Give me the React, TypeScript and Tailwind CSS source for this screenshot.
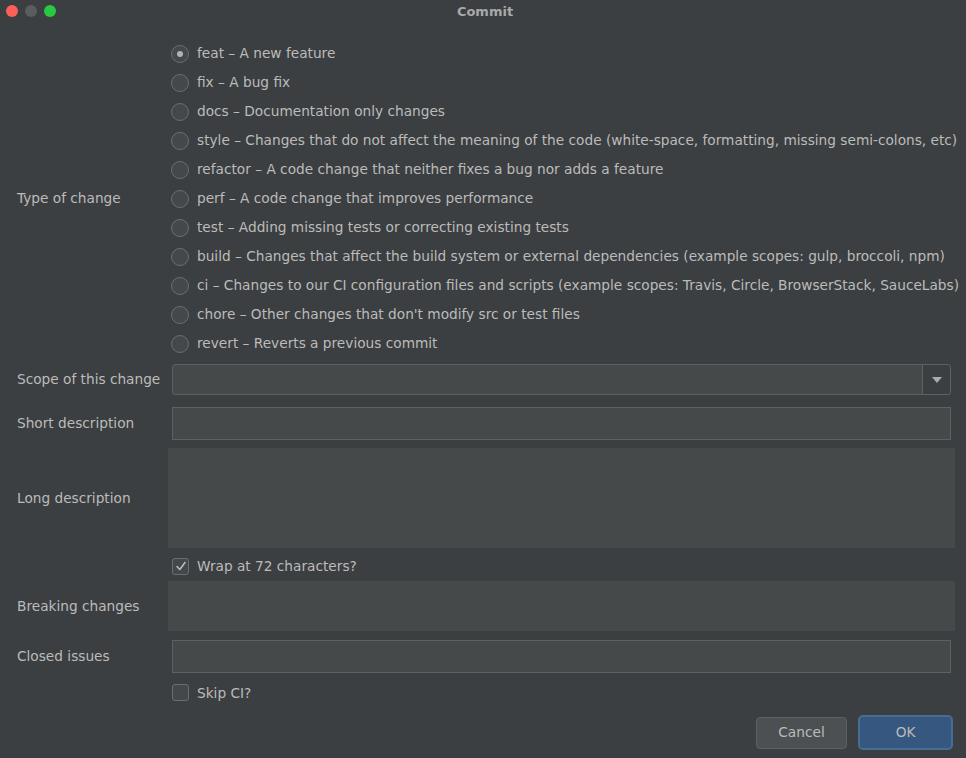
import React from "react";

const options = [
  "feat – A new feature",
  "fix – A bug fix",
  "docs – Documentation only changes",
  "style – Changes that do not affect the meaning of the code (white-space, formatting, missing semi-colons, etc)",
  "refactor – A code change that neither fixes a bug nor adds a feature",
  "perf – A code change that improves performance",
  "test – Adding missing tests or correcting existing tests",
  "build – Changes that affect the build system or external dependencies (example scopes: gulp, broccoli, npm)",
  "ci – Changes to our CI configuration files and scripts (example scopes: Travis, Circle, BrowserStack, SauceLabs)",
  "chore – Other changes that don't modify src or test files",
  "revert – Reverts a previous commit",
];

function Radio({ checked }: { checked?: boolean }) {
  return (
    <span className="w-[18px] h-[18px] rounded-full border border-[#6b6e70] bg-[#43494a] flex items-center justify-center shrink-0">
      {checked && <span className="w-[6px] h-[6px] rounded-full bg-[#b0b3b5]" />}
    </span>
  );
}

function Checkbox({ checked }: { checked?: boolean }) {
  return (
    <span className="w-[17px] h-[17px] rounded-[3px] border border-[#6b6e70] bg-[#43494a] flex items-center justify-center shrink-0">
      {checked && (
        <svg width="12" height="12" viewBox="0 0 12 12">
          <path d="M2 6.5 L4.8 9.5 L10 2.5" fill="none" stroke="#bbbbbb" strokeWidth="1.6" strokeLinecap="round" strokeLinejoin="round" />
        </svg>
      )}
    </span>
  );
}

export default function App() {
  return (
    <div
      className="w-[966px] h-[758px] bg-[#3c3f41] text-[#bbbbbb] text-[13.7px] flex flex-col overflow-hidden"
      style={{ fontFamily: '"DejaVu Sans", sans-serif' }}
    >
      {/* title bar */}
      <div className="h-[22px] flex items-center relative shrink-0">
        <div className="flex items-center gap-[7px] pl-[6px]">
          <span className="w-[12px] h-[12px] rounded-full bg-[#fe5f57]" />
          <span className="w-[12px] h-[12px] rounded-full bg-[#5a5c5e]" />
          <span className="w-[12px] h-[12px] rounded-full bg-[#28c840]" />
        </div>
        <div className="absolute inset-0 flex items-center justify-center pl-[4px] pt-[1px] text-[13px] font-bold text-[#a7a9ab]">
          Commit
        </div>
      </div>

      <div className="flex flex-col pl-[17px] pr-[11px]">
        {/* Type of change */}
        <div className="flex pt-[17px]">
          <div className="w-[154px] shrink-0 flex items-center">Type of change</div>
          <div className="flex flex-col">
            {options.map((o, i) => (
              <div key={i} className="h-[29px] flex items-center gap-[8px] whitespace-nowrap">
                <Radio checked={i === 0} />
                <span>{o}</span>
              </div>
            ))}
          </div>
        </div>

        {/* Scope */}
        <div className="flex items-center mt-[6px] h-[31px]">
          <div className="w-[155px] shrink-0">Scope of this change</div>
          <div className="flex-1 h-[31px] mr-[4px] flex rounded-[3px] border border-[#5e6163] bg-[#45494a]">
            <div className="flex-1" />
            <div className="w-[28px] border-l border-[#5e6163] bg-[#3c3f41] rounded-r-[3px] flex items-center justify-center">
              <svg width="10" height="6" viewBox="0 0 10 6">
                <path d="M0 0 H10 L5 6 Z" fill="#a9abad" />
              </svg>
            </div>
          </div>
        </div>

        {/* Short description */}
        <div className="flex items-center mt-[12px] h-[33px]">
          <div className="w-[155px] shrink-0">Short description</div>
          <div className="flex-1 h-[33px] mr-[4px] border border-[#5e6163] bg-[#45494a]" />
        </div>

        {/* Long description */}
        <div className="flex items-center mt-[8px] h-[100px]">
          <div className="w-[151px] shrink-0">Long description</div>
          <div className="flex-1 h-[100px] bg-[#45494a]" />
        </div>

        {/* Wrap */}
        <div className="flex items-center h-[33px] pt-[4px]">
          <div className="w-[155px] shrink-0" />
          <div className="flex items-center gap-[8px]">
            <Checkbox checked />
            <span>Wrap at 72 characters?</span>
          </div>
        </div>

        {/* Breaking changes */}
        <div className="flex items-center h-[50px]">
          <div className="w-[151px] shrink-0">Breaking changes</div>
          <div className="flex-1 h-[50px] bg-[#45494a]" />
        </div>

        {/* Closed issues */}
        <div className="flex items-center mt-[9px] h-[33px]">
          <div className="w-[155px] shrink-0">Closed issues</div>
          <div className="flex-1 h-[33px] mr-[4px] border border-[#5e6163] bg-[#45494a]" />
        </div>

        {/* Skip CI */}
        <div className="flex items-center h-[38px] pt-[2px]">
          <div className="w-[155px] shrink-0" />
          <div className="flex items-center gap-[8px]">
            <Checkbox />
            <span>Skip CI?</span>
          </div>
        </div>

        {/* Buttons */}
        <div className="flex justify-end items-center gap-[11px] mt-[4px]">
          <button className="w-[91px] h-[32px] rounded-[4px] border border-[#5e6163] bg-[#4c5052] text-[#bbbbbb]">
            Cancel
          </button>
          <button className="w-[95px] h-[35px] rounded-[5px] border-[2px] border-[#466d94] bg-[#365880] text-[#bbbbbb] mr-[2px]">
            OK
          </button>
        </div>
      </div>
    </div>
  );
}
